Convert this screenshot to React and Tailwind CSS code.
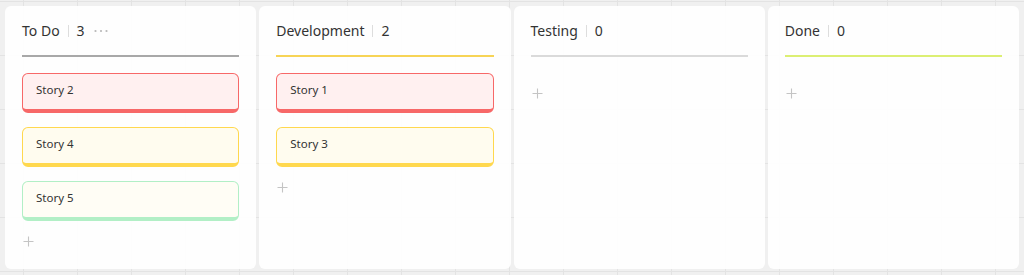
import React from "react";

const columns = [
  { title: "To Do", count: 3, line: "bg-[#a8a8a8]", more: true, stories: [
    { name: "Story 2", c: "red" },
    { name: "Story 4", c: "yellow" },
    { name: "Story 5", c: "green" },
  ] },
  { title: "Development", count: 2, line: "bg-[#f7d456]", stories: [
    { name: "Story 1", c: "red" },
    { name: "Story 3", c: "yellow" },
  ] },
  { title: "Testing", count: 0, line: "bg-[#dadada]", stories: [] },
  { title: "Done", count: 0, line: "bg-[#dcef73]", stories: [] },
];

const storyStyles = {
  red: "bg-[#fff0f0] border-[#f76868]",
  yellow: "bg-[#fffcef] border-[#ffd84e]",
  green: "bg-[#fffdf5] border-[#b2efc6]",
};

function Plus() {
  return (
    <svg width="11" height="11" viewBox="0 0 11 11" className="block">
      <path d="M5.5 0.5v10M0.5 5.5h10" stroke="#c4c4c4" strokeWidth="1.1" />
    </svg>
  );
}

function Dots() {
  return (
    <svg width="14" height="4" viewBox="0 0 14 4" className="block">
      <circle cx="1.5" cy="2" r="1.1" fill="#b8b8b8" />
      <circle cx="7" cy="2" r="1.1" fill="#b8b8b8" />
      <circle cx="12.5" cy="2" r="1.1" fill="#b8b8b8" />
    </svg>
  );
}

function Column({ col }) {
  return (
    <div className="flex-1 min-w-0 rounded-md bg-white/[0.93] pt-[15px] px-[17px] flex flex-col">
      <div className="h-[20px] flex items-center text-[14px] text-[#333333] leading-[20px]">
        <span>{col.title}</span>
        <span className="mx-[8px] w-px h-[12px] bg-[#dddddd]" />
        <span>{col.count}</span>
        {col.more && (
          <span className="ml-[9px]">
            <Dots />
          </span>
        )}
      </div>
      <div className={`mt-[14px] h-[2px] ${col.line}`} />
      <div className="mt-[16px] flex flex-col gap-[14px]">
        {col.stories.map((s) => (
          <div
            key={s.name}
            className={`h-[40px] rounded-[6px] border-[1.5px] border-b-[4px] pl-[13px] pb-[3px] flex items-center text-[11.5px] text-[#333333] ${storyStyles[s.c]}`}
          >
            {s.name}
          </div>
        ))}
      </div>
      <div className="mt-[14px] pl-[1px] h-[12px] flex items-center">
        <Plus />
      </div>
    </div>
  );
}

export default function App() {
  return (
    <div
      className="w-[1024px] h-[275px] flex gap-[3px] px-[5px] pt-[6px] pb-[6px] bg-[#f0f0f0] bg-[linear-gradient(to_right,#e3e3e3_1px,transparent_1px),linear-gradient(to_bottom,#e3e3e3_1px,transparent_1px)] bg-[size:54px_54px] bg-[position:23px_1px]"
      style={{ fontFamily: '"Noto Sans", "Open Sans", sans-serif' }}
    >
      {columns.map((c) => (
        <Column key={c.title} col={c} />
      ))}
    </div>
  );
}
